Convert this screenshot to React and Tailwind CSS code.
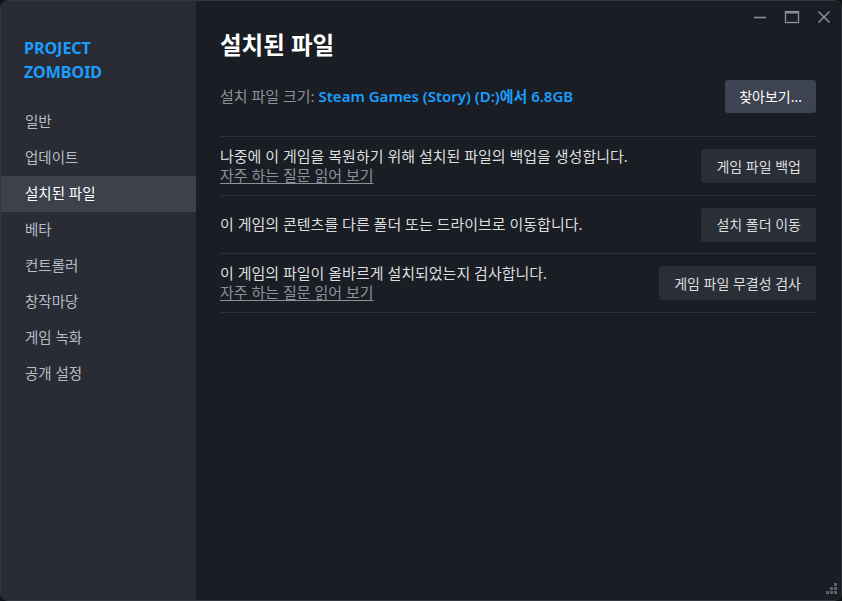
import React from 'react';

const font = { fontFamily: '"Noto Sans", "Noto Sans CJK KR", sans-serif' };

const navItems = ['일반', '업데이트', '설치된 파일', '베타', '컨트롤러', '창작마당', '게임 녹화', '공개 설정'];

function Row({ text, link, button }) {
  return (
    <div className="flex items-center justify-between border-t border-[#2c313a] min-h-[58px] py-[10px]">
      <div className="flex flex-col text-[15px] leading-[19px]">
        <span className="text-[#dcdedf]">{text}</span>
        {link && <span className="text-[#8b929a] underline underline-offset-2">{link}</span>}
      </div>
      <button className="h-[34px] px-[15px] rounded-[3px] bg-[#2a2e37] text-[#dcdedf] text-[14px]">{button}</button>
    </div>
  );
}

export default function App() {
  return (
    <div className="w-[842px] h-[601px] bg-[#101216]" style={font}>
      <div className="relative w-full h-full flex rounded-[8px] overflow-hidden border border-[#33373f]">
        {/* 사이드바 */}
        <div className="w-[195px] shrink-0 bg-[#292c34] pt-[35px]">
          <div className="pl-[23px] text-[#1a9fff] font-bold text-[16px] leading-[24px]">
            <div>PROJECT</div>
            <div>ZOMBOID</div>
          </div>
          <div className="mt-[20px] flex flex-col">
            {navItems.map(item => (
              <div
                key={item}
                className={`h-[36px] flex items-center pl-[24px] text-[14.5px] ${
                  item === '설치된 파일' ? 'bg-[#3d414c] text-white' : 'text-[#b8bcc4]'
                }`}
              >
                {item}
              </div>
            ))}
          </div>
        </div>

        {/* 본문 */}
        <div className="flex-1 bg-[#1a1d24] pl-[24px] pr-[25px] pt-[29px]">
          <h1 className="text-[23.5px] leading-[30px] font-bold text-white">설치된 파일</h1>
          <div className="mt-[20px] flex items-center justify-between h-[33px] mb-[23px]">
            <div className="text-[15px]">
              <span className="text-[#8b929a]">설치 파일 크기: </span>
              <span className="text-[#1a9fff] font-semibold">Steam Games (Story) (D:)에서 6.8GB</span>
            </div>
            <button className="h-[33px] px-[14px] rounded-[3px] bg-[#3d4350] text-white text-[14px]">찾아보기...</button>
          </div>
          <Row text="나중에 이 게임을 복원하기 위해 설치된 파일의 백업을 생성합니다." link="자주 하는 질문 읽어 보기" button="게임 파일 백업" />
          <Row text="이 게임의 콘텐츠를 다른 폴더 또는 드라이브로 이동합니다." button="설치 폴더 이동" />
          <Row text="이 게임의 파일이 올바르게 설치되었는지 검사합니다." link="자주 하는 질문 읽어 보기" button="게임 파일 무결성 검사" />
          <div className="border-t border-[#2c313a]" />
        </div>

        {/* 창 버튼 */}
        <div className="absolute top-[8px] right-[6px] flex items-center gap-[10px] text-[#8b929a]">
          <svg width="22" height="16" viewBox="0 0 22 16"><line x1="5" y1="8.5" x2="17" y2="8.5" stroke="currentColor" strokeWidth="1.5" /></svg>
          <svg width="22" height="16" viewBox="0 0 22 16"><rect x="4.5" y="2.5" width="13" height="11" fill="none" stroke="currentColor" strokeWidth="1.3" /><line x1="4.5" y1="3.5" x2="17.5" y2="3.5" stroke="currentColor" strokeWidth="2" /></svg>
          <svg width="22" height="16" viewBox="0 0 22 16"><path d="M5.5 2.5 L16.5 13.5 M16.5 2.5 L5.5 13.5" stroke="currentColor" strokeWidth="1.5" /></svg>
        </div>

        {/* 크기 조절 */}
        <svg className="absolute right-[3px] bottom-[3px]" width="14" height="14" viewBox="0 0 14 14" fill="#5c6370">
          <rect x="10" y="0" width="3" height="3" />
          <rect x="6" y="4" width="3" height="3" />
          <rect x="10" y="4" width="3" height="3" />
          <rect x="2" y="8" width="3" height="3" />
          <rect x="6" y="8" width="3" height="3" />
          <rect x="10" y="8" width="3" height="3" />
        </svg>
      </div>
    </div>
  );
}
